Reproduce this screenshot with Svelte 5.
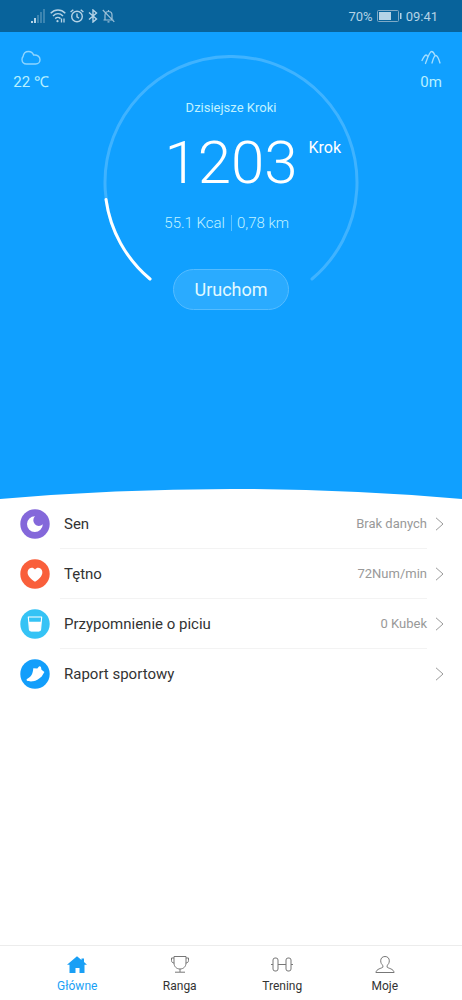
<script>
  const metrics = [
    { id: 'sleep', label: 'Sen', value: 'Brak danych', color: '#8468da' },
    { id: 'heart', label: 'Tętno', value: '72Num/min', color: '#f95f3b' },
    { id: 'water', label: 'Przypomnienie o piciu', value: '0 Kubek', color: '#35c3f5' },
    { id: 'report', label: 'Raport sportowy', value: '', color: '#129efb' }
  ];

  const tabs = [
    { id: 'home', label: 'Główne' },
    { id: 'rank', label: 'Ranga' },
    { id: 'training', label: 'Trening' },
    { id: 'me', label: 'Moje' }
  ];

  let active = $state('home');
</script>

<div class="screen">
  <header class="status">
    <div class="signals">
      <svg width="15" height="14" viewBox="0 0 15 14" fill="#b5d3e6" aria-hidden="true">
        <rect x="0" y="12" width="2" height="2" />
        <rect x="3" y="9" width="2" height="5" />
        <g opacity=".3">
          <rect x="6" y="6" width="2" height="8" />
          <rect x="9" y="3" width="2" height="11" />
          <rect x="12" y="0" width="2" height="14" />
        </g>
      </svg>
      <svg width="16" height="14" viewBox="0 0 16 14" fill="none" stroke="#b5d3e6" stroke-width="1.5" aria-hidden="true">
        <path d="M.7 4.200C5-.1 11-.1 15.300 4.200M3 7c3-2.900 7-2.900 10 0M5.200 9.600c1.500-1.500 3.800-1.500 5.300 0" />
        <circle cx="7.500" cy="12.200" r="1.100" fill="#b5d3e6" stroke="none" />
        <path d="M11.500 9.500v4M14 9.500v4" stroke-width="1.300" />
      </svg>
      <svg width="14" height="14" viewBox="0 0 14 14" fill="none" stroke="#b5d3e6" stroke-width="1.400" aria-hidden="true">
        <circle cx="7" cy="7.500" r="5.300" />
        <path d="M7 4.500v3.300l2 1.500M.6 3 3.300.8M13.400 3 10.700.8" />
      </svg>
      <svg width="10" height="14" viewBox="0 0 10 14" fill="none" stroke="#b5d3e6" stroke-width="1.400" aria-hidden="true">
        <path d="M1 3.500 8.500 10 5 13V1l3.500 3L1 10.500" />
      </svg>
      <svg width="13" height="14" viewBox="0 0 13 14" fill="none" stroke="#9cc0d7" stroke-width="1.200" aria-hidden="true">
        <path d="M1.500 11h10M3 11V6a3.500 3.500 0 0 1 7 0v5M5.500 12.800h2M6.500 1v1.500M.8 1 12.300 12.800" />
      </svg>
    </div>
    <div class="power">
      <span>70%</span>
      <svg width="25" height="12" viewBox="0 0 25 12" aria-hidden="true">
        <rect x=".5" y=".5" width="21" height="11" rx="1" fill="none" stroke="#7faac6" />
        <rect x="2" y="2" width="12" height="8" fill="#b5d3e6" />
        <rect x="23" y="3" width="1.500" height="6" fill="#b5d3e6" />
      </svg>
      <span>09:41</span>
    </div>
  </header>

  <main>
    <section class="hero">
      <div class="side">
        <svg width="20" height="16" viewBox="0 0 20 16" fill="none" stroke="#8ed5ff" stroke-width="1.400" aria-hidden="true">
          <path d="M5.500 14C2.800 14 1 12 1 9.500c0-1.400.5-2.300 1.100-3C2.500 3.500 4.800 1.500 7.500 1.500c2.600 0 4.300 1.400 5.100 3.600C16.500 4.600 19 6.800 19 9.700c0 2.500-1.900 4.300-4.300 4.300z" />
        </svg>
        <span>22 ℃</span>
      </div>

      <div class="dial">
        <svg class="ring" viewBox="0 0 256 256" fill="none" stroke-width="3" stroke-linecap="round" aria-hidden="true">
          <path d="M47 224A126 126 0 1 1 209 224" stroke="#fff" stroke-opacity=".2" />
          <path d="M47 224A126 126 0 0 1 3 144.500" stroke="#fff" />
        </svg>
        <div class="reading">
          <h1>Dzisiejsze Kroki</h1>
          <p class="steps"><span></span><strong>1203</strong><span class="unit">Krok</span></p>
          <p class="totals"><span class="energy">55.1 Kcal</span><span class="distance">0,78 km</span></p>
          <button class="start" type="button">Uruchom</button>
        </div>
      </div>

      <div class="side">
        <svg width="20" height="16" viewBox="0 0 20 16" fill="none" stroke="#a5deff" stroke-width="1.300" stroke-linecap="round" aria-hidden="true">
          <path d="M1 10.500C2.600 7 3.800 5.200 5 5c.8-.1 1.200.6 1.400 1.300M4.500 13.500C6.700 7.500 8.400 1.500 10.700 1.500c1.500 0 2.300 1.500 3.300 4M11 13C12.200 8.500 13.300 5.500 14.800 5.500c1.800 0 3 3.500 4.200 7.500" />
        </svg>
        <span>0m</span>
      </div>

      <svg class="curve" viewBox="0 0 462 11" preserveAspectRatio="none" aria-hidden="true">
        <path d="M0 11Q231-9 462 11z" fill="#fff" />
      </svg>
    </section>

    <ul class="metrics">
      {#each metrics as m (m.id)}
        <li>
          <button type="button" class="row">
            <svg width="30" height="30" viewBox="0 0 30 30" aria-hidden="true">
              <circle cx="15" cy="15" r="14.700" fill={m.color} />
              {#if m.id === 'sleep'}
                <path d="M15 7.300A7.900 7.900 0 1 0 22.800 15.300 4.800 4.800 0 0 1 15 7.300z" fill="#fff" />
              {:else if m.id === 'heart'}
                <path d="M15 10.600C13.500 8.200 11 8.300 9.500 9.500 7.300 11.300 7 14.700 9 17.400c1.500 2 4 4 6 5.300 2-1.300 4.500-3.300 6-5.300 2-2.700 1.700-6.100-.5-7.900-1.500-1.200-4-1.300-5.500 1.100z" fill="#fff" />
              {:else if m.id === 'water'}
                <path d="M8.300 8h13.400l-1.100 12.500q-.2 1.500-1.700 1.500h-7.800q-1.500 0-1.700-1.500z" fill="none" stroke="#fff" stroke-width="1.100" stroke-linejoin="round" />
                <path d="M8.800 12.800h12.400l-.7 7.700q-.2 1.700-1.700 1.700h-7.600q-1.500 0-1.700-1.700z" fill="#fff" />
              {:else}
                <path d="M13.300 9.300 17.300 9.600l1.900-2.400 1.700.5.600 3 2.900 2.300-2.700 4.500c-3 2.600-5.500 4.500-8.700 4.800-2.400.2-5.900.1-6.400-1.100-.3-.9.800-1.600 1.900-2.200 3-1.700 4.300-4.200 4.800-9.700z" fill="#fff" />
              {/if}
            </svg>
            <span class="body">
              <span>{m.label}</span>
              <span class="value">{m.value}</span>
            </span>
            <svg width="9" height="14" viewBox="0 0 9 14" fill="none" stroke="#999" aria-hidden="true">
              <path d="M1 .8 8 7 1 13.200" />
            </svg>
          </button>
        </li>
      {/each}
    </ul>
  </main>

  <nav>
    {#each tabs as tab (tab.id)}
      <button
        type="button"
        class="tab"
        class:active={active === tab.id}
        aria-current={active === tab.id ? 'page' : undefined}
        onclick={() => (active = tab.id)}
      >
        <svg width="24" height="20" viewBox="0 0 24 20" fill="none" stroke="currentColor" stroke-linejoin="round" aria-hidden="true">
          {#if tab.id === 'home'}
            <path d="M12 1.200 16.500 5V3.500H19V7l3 2.800H19.500V18h-5v-5h-4v5h-6V9.800H2z" fill="currentColor" stroke="none" />
          {:else if tab.id === 'rank'}
            <path d="M6 1.500h12V8c0 3.500-2.500 6-6 6s-6-2.500-6-6zM6 3H3.500v2.500c0 1.500 1 2.500 2.700 2.500M18 3h2.500v2.500c0 1.500-1 2.500-2.700 2.500M12 14v3M7 17.200h10" />
          {:else if tab.id === 'training'}
            <rect x="3" y="3" width="5" height="13" rx="2" />
            <rect x="16" y="3" width="5" height="13" rx="2" />
            <path d="M8 9.500h8M1 9.500h2M21 9.500h2" />
          {:else}
            <path d="M12 1.500c-2.700 0-4.300 1.800-4.300 4.300 0 2 .9 3.700 2.200 4.700v1.700c-1.500 1.300-6.400 1.500-7 5.300h18.200c-.6-3.800-5.500-4-7-5.300v-1.700c1.300-1 2.200-2.700 2.200-4.700 0-2.500-1.600-4.300-4.300-4.300z" />
          {/if}
        </svg>
        <span>{tab.label}</span>
      </button>
    {/each}
  </nav>
</div>

<style>
  :global(body) {
    margin: 0;
    background: #fff;
  }

  .screen {
    display: flex;
    flex-direction: column;
    min-height: 100vh;
    font-family: Roboto, 'Liberation Sans', sans-serif;
    color: #333;
  }

  svg {
    display: block;
    flex: none;
  }

  button {
    margin: 0;
    padding: 0;
    border: 0;
    background: none;
    font: inherit;
    color: inherit;
    cursor: pointer;
  }

  .status {
    display: flex;
    justify-content: space-between;
    align-items: center;
    height: 32px;
    padding: 0 24px 0 31px;
    background: #08639b;
    color: #b5d3e6;
    font-size: 13px;
  }

  .signals,
  .power {
    display: flex;
    align-items: center;
    gap: 4px;
  }

  main {
    flex: 1;
  }

  .hero {
    display: grid;
    grid-template-columns: 62px 1fr 62px;
    justify-items: center;
    background: #10a0ff;
  }

  .side {
    display: flex;
    flex-direction: column;
    align-items: center;
    gap: 6px;
    padding-top: 18px;
    color: #b8f0ff;
    font-size: 15px;
    line-height: 20px;
  }

  .dial {
    display: grid;
    width: 256px;
    padding: 23px 0 177px;
  }

  .ring,
  .reading {
    grid-area: 1 / 1;
  }

  .ring {
    width: 100%;
  }

  .reading {
    display: flex;
    flex-direction: column;
    align-items: center;
    padding-top: 43px;
    color: #c0f2ff;
  }

  h1 {
    margin: 0;
    font-size: 13px;
    font-weight: 400;
    line-height: 20px;
  }

  p {
    margin: 0;
  }

  .steps {
    display: grid;
    grid-template-columns: 1fr auto 1fr;
    align-self: stretch;
    column-gap: 11px;
    margin-top: 10px;
    color: #fff;
  }

  .steps strong {
    font-size: 60px;
    font-weight: 300;
    line-height: 70px;
  }

  .unit {
    padding-top: 10px;
    font-size: 16px;
    line-height: 20px;
  }

  .totals {
    display: grid;
    grid-template-columns: 1fr 1fr;
    align-self: stretch;
    align-items: center;
    margin-top: 14px;
    font-size: 15px;
    font-weight: 300;
    line-height: 22px;
  }

  .energy {
    padding-right: 6px;
    text-align: right;
  }

  .distance {
    padding-left: 5px;
    border-left: 1px solid #5cc2ff;
    line-height: 16px;
  }

  .start {
    box-sizing: border-box;
    min-width: 115px;
    height: 41px;
    margin-top: 35px;
    padding: 0 20px;
    border: 1px solid #55bcff;
    border-radius: 21px;
    background: #2aabff;
    color: #e2faff;
    font-size: 18px;
  }

  .curve {
    grid-column: 1 / -1;
    width: 100%;
    height: 11px;
  }

  .metrics {
    margin: 0;
    padding: 0;
    list-style: none;
  }

  .row {
    display: flex;
    align-items: center;
    width: 100%;
    padding: 0 18px 0 20px;
    font-size: 15px;
    text-align: left;
  }

  .body {
    display: flex;
    flex: 1;
    align-items: center;
    justify-content: space-between;
    height: 49px;
    margin: 0 8px 0 10px;
    padding-left: 4px;
    border-bottom: 1px solid #f3f3f3;
  }

  li:last-child .body {
    border-color: transparent;
  }

  .value {
    color: #999;
    font-size: 13px;
  }

  nav {
    display: grid;
    grid-template-columns: repeat(4, 1fr);
    padding: 0 26px;
    border-top: 1px solid #ececec;
  }

  .tab {
    display: flex;
    flex-direction: column;
    align-items: center;
    gap: 3px;
    padding: 9px 0 6px;
    font-size: 12px;
    line-height: 16px;
  }

  .tab svg {
    color: #777;
  }

  .tab.active,
  .tab.active svg {
    color: #199ff5;
  }
</style>
